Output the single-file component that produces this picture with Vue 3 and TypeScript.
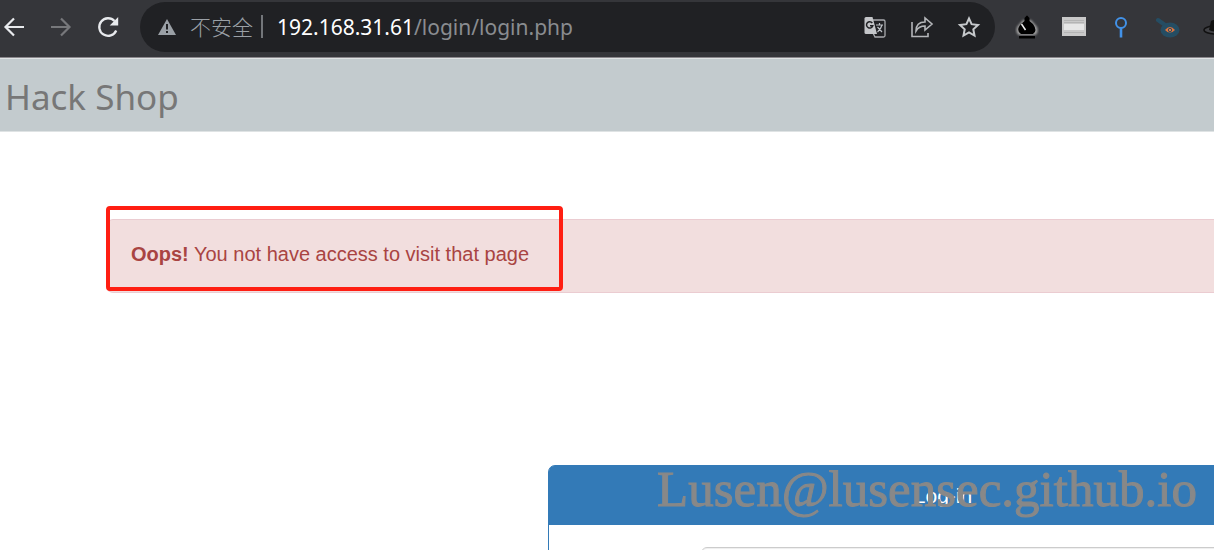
<script setup lang="ts">
const host: string = '192.168.31.61'
const path: string = '/login/login.php'
</script>

<template>
  <div class="window">
    <header class="toolbar">
      <nav class="nav">
        <button type="button" class="icon" aria-label="Back">
          <svg width="24" height="24" viewBox="0 0 24 24" fill="none" stroke="#e8eaed" stroke-width="2.2"><path d="M22 12H4M12 3.500L3.500 12L12 20.500" /></svg>
        </button>
        <button type="button" class="icon" aria-label="Forward">
          <svg width="24" height="24" viewBox="0 0 24 24" fill="none" stroke="#77787b" stroke-width="2.200"><path d="M2 12H20M12 3.500L20.500 12L12 20.500" /></svg>
        </button>
        <button type="button" class="icon" aria-label="Reload">
          <svg width="24" height="24" viewBox="0 0 24 24"><path d="M20.200 15.500A8.800 8.800 0 1 1 18.500 6" fill="none" stroke="#e8eaed" stroke-width="2.300" /><path d="M22.200 2V10.500H13.700Z" fill="#e8eaed" /></svg>
        </button>
      </nav>
      <div class="address">
        <svg class="warn" width="20" height="18" viewBox="0 0 20 18"><path d="M10 1L19 17H1Z" fill="#9aa0a6" /><path d="M10 6V11.500M10 13V15" stroke="#202124" stroke-width="2" /></svg>
        <span class="insecure">不安全</span>
        <span class="divider"></span>
        <span class="url"><span class="host">{{ host }}</span>{{ path }}</span>
        <div class="actions">
          <button type="button" class="icon" aria-label="Translate">
            <svg width="24" height="24" viewBox="0 0 24 24"><path d="M10 5H20.500Q22 5 22 6.500V20.500Q22 22 20.500 22H12L10 18" fill="none" stroke="#a9abae" stroke-width="1.300" /><path d="M3 2H9.500L14 19H3Q1.500 19 1.500 17.500V3.500Q1.500 2 3 2Z" fill="#c4c6c9" /><path d="M9.300 8A3.200 3.200 0 1 0 9.800 10.800H7" fill="none" stroke="#202124" stroke-width="1.500" /><path d="M13 10H20M16.500 8V10M19 10Q18 14 14.500 17M14.500 12L19 17" fill="none" stroke="#bdc1c6" stroke-width="1.200" /></svg>
          </button>
          <button type="button" class="icon" aria-label="Share">
            <svg width="24" height="24" viewBox="0 0 24 24" fill="none" stroke="#b4b6b9" stroke-width="1.600"><path d="M2 7V21.500H18V18M6 16C6 10 9 7 15 7V3L22 9L15 15V11C11 11 8 12.500 6 16Z" /></svg>
          </button>
          <button type="button" class="icon" aria-label="Bookmark">
            <svg width="24" height="24" viewBox="0 0 24 24" fill="none" stroke="#c6c9cc" stroke-width="2"><path d="M12 3.500L14.600 9.200L21 10L16.300 14.300L17.500 20.500L12 17.400L6.500 20.500L7.700 14.300L3 10L9.400 9.200Z" /></svg>
          </button>
        </div>
      </div>
      <div class="extensions">
        <button type="button" class="icon" aria-label="Flask extension">
          <svg width="24" height="24" viewBox="0 0 24 24"><defs><filter id="glow" x="-50%" y="-50%" width="200%" height="200%"><feGaussianBlur stdDeviation="1" /></filter></defs><path d="M8 5H16L22 12Q24 18 20 20H4Q0 18 2 12Z" fill="#a0a0a0" filter="url(#glow)" /><path d="M10.500 2Q12 -1 13.500 2L14.500 3V6L18 9Q23 16 18 19H6Q1 16 5 10L9.500 6V3ZM4 21H20V23.500H4Z" fill="#000" /><path d="M6.500 9L10.500 15" stroke="#eee" stroke-width="1.500" /></svg>
        </button>
        <button type="button" class="icon" aria-label="Panel extension">
          <svg width="24" height="24" viewBox="0 0 24 24"><path d="M0 2H24V21H0Z" fill="#c9c9c9" /><path d="M2 9H22V15H2Z" fill="#e6e6e6" /><path d="M2 5.500H22M2 7.500H22M2 17.500H22" stroke="#b4b4b4" /></svg>
        </button>
        <button type="button" class="icon" aria-label="Pin extension">
          <svg width="24" height="24" viewBox="0 0 24 24" fill="none" stroke="#4292e8" stroke-width="2"><circle cx="12" cy="8" r="5" /><path d="M12 13V22.500" stroke-width="2.600" /></svg>
        </button>
        <button type="button" class="icon" aria-label="Watch extension">
          <svg width="24" height="24" viewBox="0 0 24 24"><path d="M2 5L9 10" stroke="#254d63" stroke-width="4" stroke-linecap="round" /><ellipse cx="14" cy="15" rx="9.500" ry="7.500" fill="#254d63" /><path d="M9 15Q14 9 19 15Q14 20 9 15Z" fill="#e0763f" /><circle cx="14" cy="15" r="1.700" fill="none" stroke="#254d63" /></svg>
        </button>
        <button type="button" class="icon" aria-label="Hat extension">
          <svg width="24" height="24" viewBox="0 0 24 24"><ellipse cx="12" cy="15" rx="11" ry="4" fill="#404145" stroke="#111" stroke-width="1.500" /><path d="M6 15L8 6Q12 4 16 6L18 15Q12 18 6 15Z" fill="#111" /></svg>
        </button>
      </div>
    </header>

    <div class="navbar"><a class="brand" href="#">Hack Shop</a></div>

    <main class="content">
      <div class="alert" role="alert">
        <strong>Oops!</strong> You not have access to visit that page
        <span class="highlight"></span>
      </div>
      <section class="panel">
        <h1 class="heading">Log-in</h1>
        <form class="form"><input class="field" type="text" aria-label="Username" /></form>
        <span class="watermark">Lusen@lusensec.github.io</span>
      </section>
    </main>
  </div>
</template>

<style>
body { margin: 0; background: #fff; }
</style>

<style scoped>
* { box-sizing: border-box; }
.window { height: 100vh; overflow: hidden; font-family: "Liberation Sans", Arial, sans-serif; }
.toolbar { display: flex; align-items: center; height: 58px; padding-bottom: 4px; background: #35363a; border-bottom: 1px solid #8a878c; overflow: hidden; }
.nav { display: flex; flex: none; gap: 23px; padding-left: 2px; width: 140px; }
.icon { flex: none; display: block; width: 24px; height: 24px; padding: 0; border: 0; background: none; }
.icon svg { display: block; }
.address { display: flex; flex: 1; align-items: center; height: 50px; padding: 0 14px 0 17px; border-radius: 25px; background: #202124; color: #898c90; font-family: "Noto Sans", "Noto Sans CJK SC", sans-serif; font-size: 21px; white-space: nowrap; }
.warn { flex: none; }
.insecure { margin-left: 13px; padding-bottom: 2px; color: #9aa0a6; font-family: "Noto Sans CJK SC", sans-serif; font-size: 21px; font-weight: 300; }
.divider { width: 2px; height: 23px; margin: 0 14px 0 8px; background: #73767a; }
.host { color: #fff; }
.actions { display: flex; gap: 23px; margin-left: auto; }
.extensions { display: flex; flex: none; gap: 23px; width: 219px; padding-left: 20px; }
.navbar { display: flex; align-items: center; height: 74px; padding: 2px 5px 0; background: #c3cbce; border-top: 1px solid #dfe3e4; border-bottom: 1px solid #dfe3e4; }
.brand { color: #777; font-family: "Noto Sans", sans-serif; font-size: 35px; text-decoration: none; }
.content { padding-top: 87px; padding-left: 107px; }
.alert { position: relative; height: 74px; padding: 20px 23px; border: 1px solid #ebccd1; border-right: 0; border-radius: 6px 0 0 6px; background: #f2dede; color: #a94442; font-size: 20px; line-height: 29px; white-space: nowrap; }
.highlight { position: absolute; top: -14px; left: -2px; width: 457px; height: 85px; border: 4px solid #ff1e12; border-radius: 4px; }
.panel { position: relative; width: 790px; margin: 172px 0 0 441px; border: 1px solid #337ab7; border-radius: 7px; }
.heading { margin: 0; padding: 15px; border-radius: 5px 5px 0 0; background: #337ab7; color: #fff; font-size: 21px; font-weight: 400; line-height: 29px; text-align: center; }
.form { padding: 22px 23px 22px 152px; }
.field { display: block; width: 100%; height: 51px; border: 1px solid #ccc; border-radius: 6px; box-shadow: inset 0 1px 1px #eee; }
.watermark { position: absolute; top: -6px; left: 108px; color: #888; font-family: "Liberation Serif", serif; font-size: 51px; line-height: 58px; -webkit-text-stroke: 1px #888; }
</style>
